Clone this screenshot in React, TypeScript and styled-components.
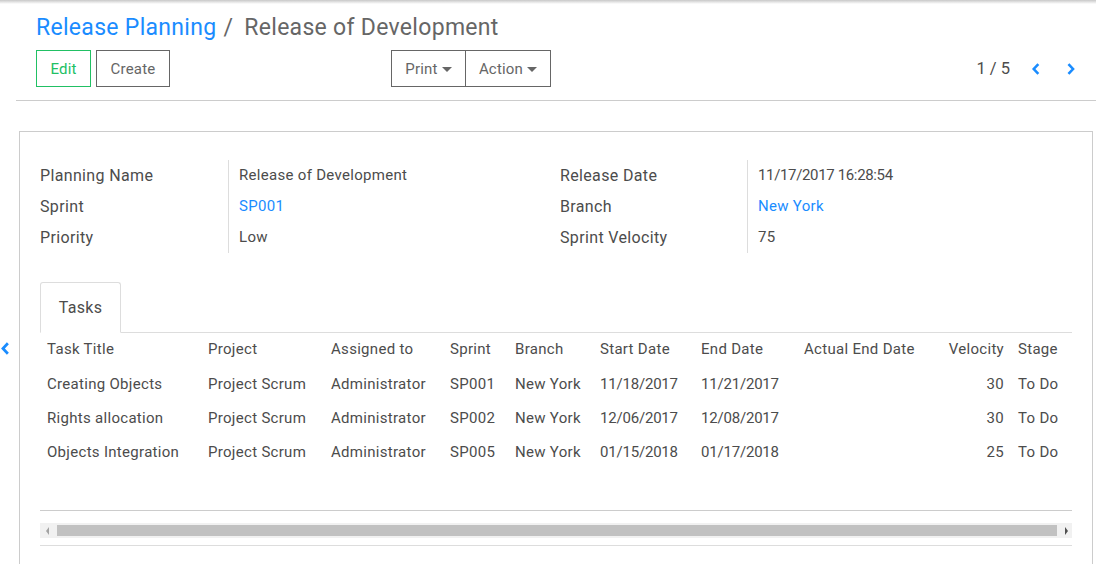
import React from "react";
import styled, { createGlobalStyle } from "styled-components";

const Global = createGlobalStyle`
  html, body { margin: 0; padding: 0; background: #fff; }
  body { font-family: Roboto, "Noto Sans", sans-serif; color: #4c4c4c; width: 1096px; height: 564px; overflow: hidden; }
  * { box-sizing: border-box; }
`;

const Page = styled.div`
  position: relative;
  width: 1096px;
  height: 564px;
  overflow: hidden;
`;

const TopShadow = styled.div`
  height: 4px;
  background: linear-gradient(#c8c8c8, #fff);
`;

const ControlPanel = styled.div`
  margin-left: 16px;
  padding: 9px 0 13px 20px;
  border-bottom: 1px solid #ccc;
`;

const Breadcrumb = styled.div`
  display: flex;
  align-items: baseline;
  font-size: 23px;
  letter-spacing: 0.3px;
  line-height: 30px;
  height: 30px;
`;

const Crumb = styled.span`
  color: #1a8cff;
`;

const Sep = styled.span`
  color: #666;
  padding: 0 11px 0 7px;
`;

const Current = styled.span`
  color: #666;
`;

const ButtonRow = styled.div`
  display: flex;
  align-items: center;
  margin-top: 7px;
  height: 37px;
`;

const Btn = styled.button<{ $primary?: boolean; $w: number }>`
  height: 37px;
  width: ${(p) => p.$w}px;
  background: #fff;
  border: 1px solid ${(p) => (p.$primary ? "#21c064" : "#666")};
  color: ${(p) => (p.$primary ? "#21c064" : "#666")};
  font-family: Roboto, sans-serif;
  font-size: 15px;
  letter-spacing: 0.2px;
  padding: 0;
  margin-right: 5px;
  display: flex;
  align-items: center;
  justify-content: center;
  gap: 2px;
`;

const Group = styled.div`
  display: flex;
  margin-left: 216px;
  & > button { margin-right: 0; }
  & > button + button { border-left: none; }
`;

const Caret = styled.span`
  display: inline-block;
  width: 0;
  height: 0;
  border-left: 5px solid transparent;
  border-right: 5px solid transparent;
  border-top: 5px solid #666;
  margin-left: 2px;
  margin-top: 1px;
`;

const Pager = styled.div`
  margin-left: auto;
  display: flex;
  align-items: center;
  font-size: 16.5px;
  color: #4c4c4c;
  padding-right: 18px;
`;

const PagerValue = styled.span`
  margin-right: 19px;
`;

const Arrow = styled.div`
  display: flex;
  width: 14px;
  justify-content: center;
  & + & { margin-left: 21px; }
`;

const Sheet = styled.div`
  margin: 30px 3px 0 19px;
  border: 1px solid #ccc;
  border-bottom: none;
  height: 440px;
  padding: 28px 20px 0 20px;
`;

const Fields = styled.div`
  display: grid;
  grid-template-columns: 520px 1fr;
`;

const FieldGroup = styled.div<{ $label: number }>`
  display: grid;
  grid-template-columns: ${(p) => p.$label}px 1fr;
`;

const Label = styled.div`
  font-size: 16px;
  letter-spacing: 0.35px;
  height: 31px;
  line-height: 31px;
  color: #4c4c4c;
  white-space: nowrap;
`;

const ValueCol = styled.div`
  border-left: 1px solid #ddd;
  padding-left: 10px;
`;

const Value = styled.div<{ $link?: boolean; $num?: boolean }>`
  font-size: 15px;
  letter-spacing: ${(p) => (p.$num ? "-0.35px" : "0.3px")};
  height: 31px;
  line-height: 31px;
  white-space: nowrap;
  color: ${(p) => (p.$link ? "#1a8cff" : "#4c4c4c")};
`;

const Tabs = styled.div`
  display: flex;
  margin-top: 29px;
  border-bottom: 1px solid #ddd;
`;

const Tab = styled.div`
  width: 81px;
  height: 51px;
  border: 1px solid #ddd;
  border-bottom: 1px solid #fff;
  border-radius: 3px 3px 0 0;
  margin-bottom: -1px;
  font-size: 16px;
  letter-spacing: 0.3px;
  display: flex;
  align-items: center;
  justify-content: center;
  color: #4c4c4c;
  background: #fff;
`;

const Table = styled.table`
  border-collapse: collapse;
  table-layout: fixed;
  font-size: 15px;
  letter-spacing: 0.3px;
  width: 1032px;
`;

const Th = styled.th<{ $right?: boolean }>`
  font-weight: normal;
  text-align: ${(p) => (p.$right ? "right" : "left")};
  height: 34px;
  padding: 0 7px 3px;
  color: #4c4c4c;
  white-space: nowrap;
  vertical-align: middle;
`;

const Td = styled.td<{ $right?: boolean; $num?: boolean }>`
  text-align: ${(p) => (p.$right ? "right" : "left")};
  letter-spacing: ${(p) => (p.$num ? "-0.2px" : "0.3px")};
  height: 34px;
  padding: 0 7px;
  white-space: nowrap;
  overflow: hidden;
  color: #4c4c4c;
`;

const TableEnd = styled.div`
  margin-top: 41px;
  border-top: 1px solid #ccc;
  padding-top: 12px;
`;

const Scrollbar = styled.div`
  height: 15px;
  background: #f1f1f1;
  display: flex;
  align-items: center;
  padding: 0 4px 0 6px;
  gap: 8px;
`;

const Thumb = styled.div`
  flex: 1;
  height: 11px;
  background: #c1c1c1;
`;

const Tri = styled.span<{ $dir: "l" | "r" }>`
  width: 0;
  height: 0;
  border-top: 4px solid transparent;
  border-bottom: 4px solid transparent;
  ${(p) => (p.$dir === "l" ? "border-right: 3px solid #a3a3a3;" : "border-left: 3px solid #505050;")}
`;

const BottomLine = styled.div`
  margin-top: 7px;
  border-top: 1px solid #ddd;
`;

const SideArrow = styled.div`
  position: absolute;
  left: 0;
  top: 341px;
`;

const Chevron = ({ dir, size = 14 }: { dir: "l" | "r"; size?: number }) => (
  <svg width={size * 0.7} height={size} viewBox="0 0 10 14">
    <path
      d={dir === "l" ? "M7.5 2 L2.8 7 L7.5 12" : "M2.5 2 L7.2 7 L2.5 12"}
      fill="none"
      stroke="#1a8cff"
      strokeWidth="2.6"
    />
  </svg>
);

const cols = [
  { t: "Task Title", w: 161 },
  { t: "Project", w: 123 },
  { t: "Assigned to", w: 119 },
  { t: "Sprint", w: 65 },
  { t: "Branch", w: 85 },
  { t: "Start Date", w: 101, num: true },
  { t: "End Date", w: 103, num: true },
  { t: "Actual End Date", w: 139 },
  { t: "Velocity", w: 75, right: true },
  { t: "Stage", w: 61 },
];

const rows = [
  ["Creating Objects", "Project Scrum", "Administrator", "SP001", "New York", "11/18/2017", "11/21/2017", "", "30", "To Do"],
  ["Rights allocation", "Project Scrum", "Administrator", "SP002", "New York", "12/06/2017", "12/08/2017", "", "30", "To Do"],
  ["Objects Integration", "Project Scrum", "Administrator", "SP005", "New York", "01/15/2018", "01/17/2018", "", "25", "To Do"],
];

export default function App() {
  return (
    <Page>
      <Global />
      <TopShadow />
      <ControlPanel>
        <Breadcrumb>
          <Crumb>Release Planning</Crumb>
          <Sep>/</Sep>
          <Current>Release of Development</Current>
        </Breadcrumb>
        <ButtonRow>
          <Btn $primary $w={55}>Edit</Btn>
          <Btn $w={74}>Create</Btn>
          <Group>
            <Btn $w={75}>Print<Caret /></Btn>
            <Btn $w={85}>Action<Caret /></Btn>
          </Group>
          <Pager>
            <PagerValue>1 / 5</PagerValue>
            <Arrow><Chevron dir="l" /></Arrow>
            <Arrow><Chevron dir="r" /></Arrow>
          </Pager>
        </ButtonRow>
      </ControlPanel>
      <Sheet>
        <Fields>
          <FieldGroup $label={188}>
            <div>
              <Label>Planning Name</Label>
              <Label>Sprint</Label>
              <Label>Priority</Label>
            </div>
            <ValueCol>
              <Value>Release of Development</Value>
              <Value $link>SP001</Value>
              <Value>Low</Value>
            </ValueCol>
          </FieldGroup>
          <FieldGroup $label={187}>
            <div>
              <Label>Release Date</Label>
              <Label>Branch</Label>
              <Label>Sprint Velocity</Label>
            </div>
            <ValueCol>
              <Value $num>11/17/2017 16:28:54</Value>
              <Value $link>New York</Value>
              <Value>75</Value>
            </ValueCol>
          </FieldGroup>
        </Fields>
        <Tabs>
          <Tab>Tasks</Tab>
        </Tabs>
        <Table>
          <colgroup>
            {cols.map((c) => (
              <col key={c.t} style={{ width: c.w }} />
            ))}
          </colgroup>
          <thead>
            <tr>
              {cols.map((c) => (
                <Th key={c.t} $right={c.right}>{c.t}</Th>
              ))}
            </tr>
          </thead>
          <tbody>
            {rows.map((r, i) => (
              <tr key={i}>
                {r.map((v, j) => (
                  <Td key={j} $right={cols[j].right} $num={cols[j].num}>{v}</Td>
                ))}
              </tr>
            ))}
          </tbody>
        </Table>
        <TableEnd>
          <Scrollbar>
            <Tri $dir="l" />
            <Thumb />
            <Tri $dir="r" />
          </Scrollbar>
          <BottomLine />
        </TableEnd>
      </Sheet>
      <SideArrow><Chevron dir="l" size={15} /></SideArrow>
    </Page>
  );
}
